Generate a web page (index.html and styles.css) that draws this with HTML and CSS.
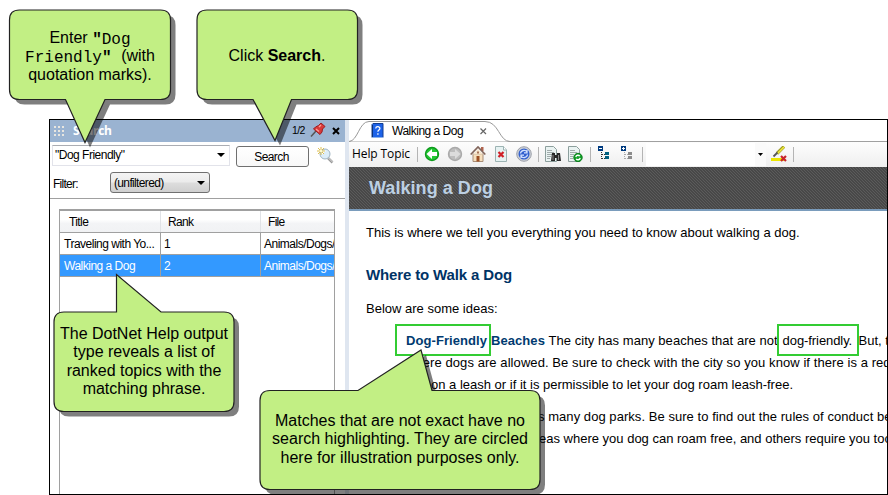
FILE: index.html
```html
<!DOCTYPE html>
<html lang="en">
<head>
<meta charset="utf-8">
<title>Walking a Dog</title>
<link rel="stylesheet" href="styles.css">
</head>
<body>
<div class="window">
  <aside class="panel">
    <header class="panel-title">
      <svg class="grip" width="12" height="12"><path d="M1 1h2v2H1zM5 1h2v2H5zM9 1h2v2H9zM1 5h2v2H1zM5 5h2v2H5zM9 5h2v2H9zM1 9h2v2H1zM5 9h2v2H5zM9 9h2v2H9z"/></svg>
      <strong>Search</strong>
      <span class="count">1/2</span>
      <svg class="pin" width="16" height="16" viewBox="0 0 16 16"><path d="M1 14.5 6 9" stroke="#555" stroke-width="1.5"/><path d="M8.5 3.5 11 1l4 3.500-2.500 2.500-.5 3-2 2.500-6.500-5.500 2-2z" fill="#d83a3a" stroke="#9c1c22"/><path d="m9 5 2-2M6 7l3 2.500" stroke="#ff9c96" stroke-width="1.300"/></svg>
      <svg class="close" width="8" height="8" viewBox="0 0 8 8"><path d="m1 1 6 6M7 1 1 7" stroke="#000" stroke-width="2"/></svg>
    </header>
    <div class="search-row">
      <div class="combo"><span>"Dog Friendly"</span><svg width="8" height="4"><path d="M0 0h8L4 4z"/></svg></div>
      <button class="search-btn">Search</button>
      <svg class="lens" width="17" height="17" viewBox="0 0 17 17"><path d="m11 11 4.500 4.500" stroke="#999" stroke-width="2.500"/><path d="m11.500 11 4 4" stroke="#ddd"/><circle cx="8" cy="7" r="5" fill="#dcedf8" stroke="#9fb4c2"/><path d="M5.500 7a3 3 0 0 1 3-3" fill="none" stroke="#fff" stroke-width="1.500"/><path d="M4 0v8M0 4h8M1 1l6 6M7 1 1 7" stroke="#d9b83c" stroke-width=".9"/><path d="M3 3h2v2H3z" fill="#fffbd0"/></svg>
    </div>
    <div class="filter-row">
      <label>Filter:</label>
      <div class="select"><span>(unfiltered)</span><svg width="8" height="4"><path d="M0 0h8L4 4z"/></svg></div>
    </div>
    <div class="results">
      <div class="row head"><span>Title</span><span>Rank</span><span>File</span></div>
      <div class="row"><span>Traveling with Yo...</span><span>1</span><span>Animals/Dogs/</span></div>
      <div class="row selected"><span>Walking a Dog</span><span>2</span><span>Animals/Dogs/</span></div>
    </div>
  </aside>
  <main class="viewer">
    <div class="tabs">
      <div class="tab">
        <svg class="tab-shape" width="161" height="22"><path d="M0 21.500C9 21 10 1.500 20 1.500H136C150 1.500 150 21.500 161 21.500" fill="#fff" stroke="#999"/></svg>
        <svg class="book" width="13" height="16" viewBox="0 0 13 16"><path d="M1 1.500 2 .5h10v14H1z" fill="#1c62e8" stroke="#123d91"/><path d="M1.500 2v12" stroke="#0b3277"/><path d="M1 14.500h11" stroke="#8bb2ec"/><path d="M4.700 5.500c.2-2.500 4.300-2.300 4.200 0 0 1.500-2 1.600-2 3.200M6.900 10.300v1.500" fill="none" stroke="#fff" stroke-width="1.300"/></svg>
        <span>Walking a Dog</span>
        <svg class="tab-close" width="7" height="7"><path d="m.5.5 5.500 5.500M6 .5.500 6" stroke="#666" stroke-width="1.200"/></svg>
      </div>
    </div>
    <div class="toolbar">
      <span class="label">Help Topic</span>
      <i class="sep"></i>
      <div class="tools">
        <svg viewBox="0 0 16 16"><circle cx="8" cy="8" r="6.500" fill="#22c832" stroke="#0d9a1c" stroke-width="1.400"/><path d="M2.500 8 8 3v3h5v4H8v3z" fill="#fff"/></svg>
        <svg viewBox="0 0 16 16"><circle cx="8" cy="8" r="6.500" fill="#bdbdbd" stroke="#a9a9a9" stroke-width="1.400"/><path d="M13.500 8 8 3v3H3v4h5v3z" fill="#dcdcdc"/></svg>
        <svg viewBox="0 0 16 16"><path d="M3 8h10v7.500H3z" fill="#f6dfbd" stroke="#a88d76"/><path d="M11 1h2.500v4H11z" fill="#b0634e"/><path d="M3 8.500 8 3l5 5.500z" fill="#f6e6cc"/><path d="M.7 8.500 8 1l7.300 7.500" fill="none" stroke="#80645a" stroke-width="1.700"/><path d="M6.500 10h3v5.500h-3z" fill="#9c4e22"/><path d="M7 5.500h2v2H7z" fill="#a8755b"/></svg>
        <svg viewBox="0 0 16 16"><path d="M2.500.5h8L13.500 4v11.500h-11z" fill="#e6f2f2" stroke="#9cb3b3"/><path d="M10.500.5V4h3" fill="#fff" stroke="#9cb3b3"/><path d="m5.500 6 5 5M10.500 6l-5 5" stroke="#d02027" stroke-width="2.200"/></svg>
        <svg viewBox="0 0 16 16"><circle cx="8" cy="8" r="7.300" fill="#ccd0d7" stroke="#9da1aa"/><circle cx="8" cy="8" r="5.500" fill="#315fce"/><path d="M4.500 7.500c.5-3.500 5-4 6.500-1.500m0-2v2.800H8M11.500 8.500c-.5 3.500-5 4-6.500 1.500m0 2V9.200h3" fill="none" stroke="#d4e2ff" stroke-width="1.300"/></svg>
      </div>
      <i class="sep"></i>
      <div class="tools">
        <svg viewBox="0 0 16 16"><path d="M.5.5h8l3 3v12H.5z" fill="#eaf3f2" stroke="#8c9f9d"/><path d="M2 4.500h5M2 6.500h7M2 8.500h5M2 10.500h4M2 12.500h3" stroke="#a0abab"/><path d="M7 7h3v2h2V7h3l1 8h-4v-3h-2v3H6z" fill="#292929"/><path d="M8 9v5M13.500 9v5" stroke="#888"/></svg>
        <svg viewBox="0 0 16 16"><path d="M.5.5h8l3 3v12H.5z" fill="#eaf3f2" stroke="#8c9f9d"/><path d="M2 4.500h5M2 6.500h7M2 8.500h4M2 10.500h3M2 12.500h3" stroke="#a0abab"/><circle cx="10" cy="11.500" r="4.200" fill="#13a22a" stroke="#087c19"/><path d="M7.800 11c.5-2.200 3-2.200 4-.8M12.200 12c-.5 2.200-3 2.200-4 .8" fill="none" stroke="#fff" stroke-width="1.300"/></svg>
      </div>
      <i class="sep"></i>
      <div class="tools">
        <svg viewBox="0 0 16 16"><path d="M1 0h5v5H1z" fill="#003b80"/><path d="M2 2.500h3" stroke="#fff"/><path d="M4.500 6v7M5 8.500h3M5 12.500h3" stroke="#333" stroke-dasharray="1 1"/><path d="M8 6h4v3H8zM8 10h4v3H8z" fill="#006080"/></svg>
        <svg viewBox="0 0 16 16"><path d="M1 0h5v5H1z" fill="#003b80"/><path d="M2 2.500h3M3.500 1v3" stroke="#fff"/><path d="M4.500 6v7M5 8.500h3M5 12.500h3" stroke="#aaa" stroke-dasharray="1 1"/><path d="M8 6h4v3H8zM8 10h4v3H8z" fill="#8b8b8b"/></svg>
      </div>
      <i class="sep"></i>
      <div class="find"></div>
      <div class="drop"><svg width="5" height="3"><path d="M0 0h5L2.500 3z"/></svg></div>
      <svg class="marker" viewBox="0 0 16 16"><path d="M0 12h13v3H0z" fill="#ece600"/><path d="m6 7.500 7-7" stroke="#9d9b24" stroke-width="3.200"/><path d="m6.500 7.500 6.500-6.500" stroke="#f0e93b" stroke-width="1.600"/><path d="m2.500 10.500 4-4" stroke="#555" stroke-width="1.800"/><path d="m10 10 5 5M15 10l-5 5" stroke="#c9252b" stroke-width="2.200"/></svg>
      <i class="sep"></i>
    </div>
    <h1>Walking a Dog</h1>
    <article>
      <p>This is where we tell you everything you need to know about walking a dog.</p>
      <h2>Where to Walk a Dog</h2>
      <p class="lead">Below are some ideas:</p>
      <div class="ideas">
        <p><b class="hit">Dog-Friendly</b><b>Beaches</b> <span class="l1">The city has many beaches that are not</span><span class="hit second">dog-friendly.</span>But, t<br><span class="l2">where dogs are allowed. Be sure to check with the city so you know if there is a req</span><br><span class="indent i3"></span>on a leash or if it is permissible to let your dog roam leash-free.</p>
        <p><span class="indent i4"></span><span class="l4">s many dog parks. Be sure to find out the rules of conduct be</span><br><span class="indent i5"></span><span>eas where you dog can roam free, and others require you too</span></p>
      </div>
    </article>
  </main>
</div>

<svg class="bubbles" width="888" height="495">
  <defs>
    <path id="b1" d="M19.500 10h141q10 0 10 10v69.500q0 10-10 10H105L85 142.500 65.500 99.500h-46q-10 0-10-10V20q0-10 10-10z"/>
    <path id="b2" d="M207 10h140.500q10 0 10 10v69.500q0 10-10 10H291.500L275 140.500 253 99.500H207q-10 0-10-10V20q0-10 10-10z"/>
    <path id="b3" d="M64 312h52.500V274.500L161 312h63q10 0 10 10v79.500q0 10-10 10H64q-10 0-10-10V322q0-10 10-10z"/>
    <path id="b4" d="M270 390.500h88L421 350l11 40.500h98q10 0 10 10v79q0 10-10 10H270q-10 0-10-10v-79q0-10 10-10z"/>
  </defs>
  <g class="shadow"><use href="#b1"/><use href="#b2"/><use href="#b3"/><use href="#b4"/></g>
  <g class="fill"><use href="#b1"/><use href="#b2"/><use href="#b3"/><use href="#b4"/></g>
</svg>
<div class="note n1">Enter <code><b>"</b>Dog<br>Friendly<b>"</b> </code>(with<br>quotation marks).</div>
<div class="note n2">Click <b>Search</b>.</div>
<div class="note n3">The DotNet Help output<br>type reveals a list of<br>ranked topics with the<br>matching phrase.</div>
<div class="note n4">Matches that are not exact have no<br>search highlighting. They are circled<br>here for illustration purposes only.</div>
</body>
</html>
```
FILE: styles.css
```css
*, *::before { box-sizing: border-box; }
body { margin: 0; padding: 119px 0 0 49px; width: 888px; height: 495px; overflow: hidden; background: #fff; position: relative; font-family: "Liberation Sans", sans-serif; color: #000; }
svg { display: block; flex: none; fill: #000; }
p, h1, h2 { margin: 0; }
.window { display: flex; width: 839px; height: 376px; border: 1px solid #000; overflow: hidden; white-space: nowrap; }

.panel { width: 299px; flex: none; border-right: 4px solid #dfe6f0; display: flex; flex-direction: column; font-size: 12px; letter-spacing: -.5px; }
.panel-title { height: 22px; background: #9ab3d1; display: flex; align-items: center; padding-left: 3px; }
.panel-title strong { font: bold 12px/20px "Open Sans", sans-serif; color: #fff; letter-spacing: -.3px; margin-left: 8px; width: 219px; }
.grip { fill: #e8e6e0; }
.count { font-size: 10.500px; letter-spacing: -.6px; width: 18px; margin-top: -3px; }
.pin { margin-top: -3px; fill: none; }
.close { margin-left: 6px; }
.search-row { display: flex; height: 29px; padding: 3px 0 0 2px; align-items: flex-start; }
.combo { width: 178px; height: 21px; border: 1px solid #e2e3ea; border-top-color: #abadb3; display: flex; align-items: center; justify-content: space-between; padding: 0 4px 1px 2px; }
.search-btn { width: 73px; height: 21px; margin: 1px 0 0 6px; border: 1px solid #707070; border-radius: 3px; background: linear-gradient(#fff, #f8f8f8); font: 12px "Liberation Sans", sans-serif; letter-spacing: -.6px; padding: 0 2px 0 0; color: #000; }
.lens { margin: 2px 0 0 8px; }
.filter-row { display: flex; height: 28px; padding: 1px 0 0 3px; border-bottom: 1px solid #a0a0a0; }
.filter-row label { width: 57px; line-height: 25px; letter-spacing: -.75px; }
.select { width: 100px; height: 21px; border: 1px solid #707070; border-radius: 3px; background: linear-gradient(#f4f4f4, #ebebeb 48%, #ddd 52%, #cfcfcf); display: flex; align-items: center; justify-content: space-between; padding: 0 4px 0 3px; letter-spacing: -.65px; }
.results { flex: 1; margin: 10px 10px 0 9px; border: solid #a0a0a0; border-width: 2px 1px 0; overflow: hidden; }
.row { display: grid; grid-template-columns: 101px 100px 1fr; height: 22px; border-bottom: 1px solid #a0a0a0; line-height: 22px; }
.row span { padding-left: 4px; border-right: 1px solid #a0a0a0; overflow: hidden; }
.row span:not(:first-child) { padding-left: 3px; }
.row span:last-child { border: 0; }
.head { background: linear-gradient(#fff 40%, #f3f4f6 60%, #f1f2f4); }
.head span { padding-left: 9px; border-color: #e0e2e6; letter-spacing: -.6px; }
.head span:not(:first-child) { letter-spacing: -.7px; padding-left: 7px; }
.selected { background: #39f; color: #fff; }

.viewer { flex: 1; min-width: 0; display: flex; flex-direction: column; }
.tabs { height: 22px; border-bottom: 1px solid #a0a0a0; }
.tab { position: relative; width: 161px; height: 22px; display: flex; align-items: center; padding-left: 22px; font-size: 12px; letter-spacing: -.5px; }
.tab-shape { position: absolute; left: 0; top: 0; }
.book, .tab span, .tab-close { position: relative; }
.tab span { margin-left: 8px; width: 88px; }
.toolbar { height: 25px; display: flex; align-items: center; padding-left: 3px; background: linear-gradient(#fdfdfd, #efefef); }
.label { font: 12px "Open Sans", sans-serif; letter-spacing: -.1px; width: 59px; margin-top: -2px; }
.sep { width: 1px; height: 15px; background: #b4b4b4; margin: 0 6px; flex: none; }
.tools { display: flex; gap: 7px; margin-top: -1px; }
.tools svg, .marker { width: 16px; height: 16px; }
.find { width: 109px; height: 23px; margin-left: -3px; background: #fff; }
.drop { width: 11px; height: 23px; background: #fafafa; display: flex; align-items: center; justify-content: center; }
.marker { margin: -1px 0 0 5px; }
h1 { height: 44px; padding-left: 20px; border-bottom: 2px solid #7a9cbc; background: repeating-linear-gradient(45deg, #484848 0 1px, #5b5b5b 1px 2.120px); color: #bcd0e3; font-size: 18px; line-height: 42px; letter-spacing: .05px; }
article { padding: 11px 0 0 17px; font-size: 13px; line-height: 22px; }
h2 { color: #003366; font-size: 15px; letter-spacing: -.14px; line-height: 22px; margin-top: 20px; }
.lead { margin-top: 12px; }
.ideas { padding-left: 40px; }
.ideas p { margin-top: 10px; }
.ideas b { color: #003a70; letter-spacing: .07px; }
.hit { position: relative; display: inline-block; width: 85px; }
.hit::before { content: ""; position: absolute; left: -11px; top: -6px; width: 96px; height: 32px; border: 2px solid #3c3; }
.hit.second { width: 76px; margin-left: 5px; letter-spacing: -.08px; }
.hit.second::before { left: -6px; width: 82px; }
.l1 { letter-spacing: .036px; }
.l2 { letter-spacing: .075px; }
.l4 { letter-spacing: .05px; }
.indent { display: inline-block; }
.i3 { width: 25px; }
.i4 { width: 132px; }
.i5 { width: 133px; }

.bubbles { position: absolute; left: 0; top: 0; }
.shadow { fill: #000; opacity: .5; transform: translate(5px, 5px); }
.fill { fill: #c2ef84; stroke: #222; stroke-width: 1.200; }
.note { position: absolute; text-align: center; font-size: 16px; line-height: 18.400px; white-space: nowrap; }
.note code { font: 16px/1 "Liberation Mono", monospace; position: relative; top: 1px; }
.n1 { left: 10px; top: 29px; width: 160px; }
.n2 { left: 197px; top: 47px; width: 160px; }
.n3 { left: 54px; top: 325px; width: 180px; }
.n4 { left: 260px; top: 412px; width: 280px; }
```
